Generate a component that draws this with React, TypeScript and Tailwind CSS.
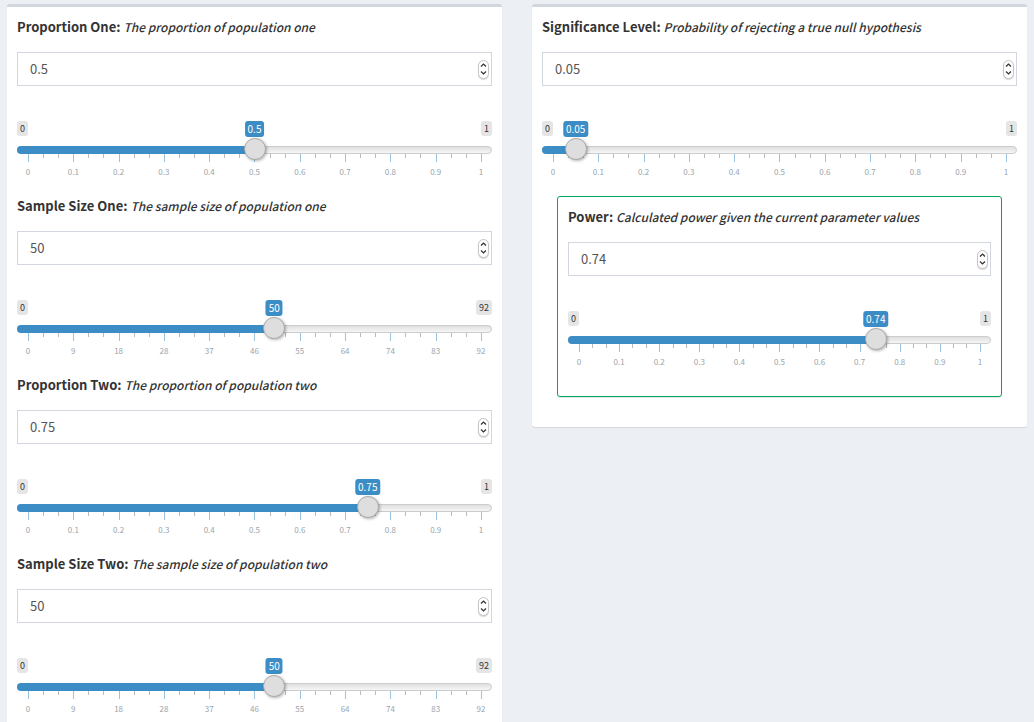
import { useId, useState } from "react";

type Parameter = {
  name: string;
  description: string;
  initial: number;
  max: number;
  step: number;
  ticks: number[];
};

const unitTicks = [0, 0.1, 0.2, 0.3, 0.4, 0.5, 0.6, 0.7, 0.8, 0.9, 1];
const sizeTicks = [0, 9, 18, 28, 37, 46, 55, 64, 74, 83, 92];

const populations: Parameter[] = [
  { name: "Proportion One", description: "The proportion of population one", initial: 0.5, max: 1, step: 0.01, ticks: unitTicks },
  { name: "Sample Size One", description: "The sample size of population one", initial: 50, max: 92, step: 1, ticks: sizeTicks },
  { name: "Proportion Two", description: "The proportion of population two", initial: 0.75, max: 1, step: 0.01, ticks: unitTicks },
  { name: "Sample Size Two", description: "The sample size of population two", initial: 50, max: 92, step: 1, ticks: sizeTicks },
];

const significance: Parameter = {
  name: "Significance Level",
  description: "Probability of rejecting a true null hypothesis",
  initial: 0.05,
  max: 1,
  step: 0.01,
  ticks: unitTicks,
};

const power: Parameter = {
  name: "Power",
  description: "Calculated power given the current parameter values",
  initial: 0.74,
  max: 1,
  step: 0.01,
  ticks: unitTicks,
};

function Chevron({ up = false }: { up?: boolean }) {
  return (
    <svg viewBox="0 0 7 4" className="h-1 w-[7px]" fill="none" stroke="#333" strokeWidth="1.3" aria-hidden="true">
      <path d={up ? "M1 3.4 3.5 1.1 6 3.4" : "M1 .6l2.5 2.3L6 .6"} />
    </svg>
  );
}

function Control({ parameter }: { parameter: Parameter }) {
  const { name, description, initial, max, step, ticks } = parameter;
  const [value, setValue] = useState(initial);
  const id = useId();
  const share = value / max;
  const change = (next: number) => setValue(Math.min(max, Math.max(0, Number(next.toFixed(2)))));

  return (
    <div className="pb-[18px]">
      <label htmlFor={id} className="block text-[13px] leading-5 font-bold whitespace-nowrap text-[#333]">
        {name}: <em className="text-[12px] font-medium">{description}</em>
      </label>

      <div className="mt-[15px] flex h-[34px] items-center border border-[#d2d6de] bg-white">
        <input
          id={id}
          type="number"
          min={0}
          max={max}
          step={step}
          value={value}
          onChange={(event) => change(Number(event.target.value))}
          className="h-full min-w-0 flex-1 appearance-none bg-transparent px-3 pb-0.5 text-[13px] text-[#555] outline-none [-moz-appearance:textfield] [&::-webkit-inner-spin-button]:appearance-none"
        />
        <div className="mr-0.5 flex h-[19px] w-[11px] flex-col overflow-hidden rounded-full border border-[#c4c4c4] bg-white shadow-[0_1px_1px_rgba(0,0,0,0.15)]">
          <button type="button" aria-label={`Increase ${name}`} onClick={() => change(value + step)} className="flex flex-1 items-end justify-center pb-0.5">
            <Chevron up />
          </button>
          <button type="button" aria-label={`Decrease ${name}`} onClick={() => change(value - step)} className="flex flex-1 items-start justify-center pt-0.5">
            <Chevron />
          </button>
        </div>
      </div>

      <div className="relative mt-[35px]">
        <div className="flex h-4 items-start justify-between text-[9px] leading-[15px] text-[#333]">
          <span className="rounded-[3px] bg-[#e5e5e5] px-[3px]">0</span>
          <span className="rounded-[3px] bg-[#e5e5e5] px-[3px]">{max}</span>
        </div>
        <output
          htmlFor={id}
          className="absolute top-0 -translate-x-1/2 rounded-[3px] bg-[#3c8dc5] px-[3px] text-[10px] leading-4 text-white"
          style={{ left: `calc(11px + (100% - 22px) * ${share})` }}
        >
          {value}
        </output>

        <div className="relative mt-[9px] h-2 rounded-lg border border-[#ccc] bg-linear-to-b from-[#e0e0e0] to-[#f6f6f6]">
          <div
            className="absolute -top-px -left-px h-2 rounded-l-lg bg-[#3c8dc5]"
            style={{ width: `calc(11px + (100% - 20px) * ${share})` }}
          />
          <input
            type="range"
            aria-label={`${name} slider`}
            min={0}
            max={max}
            step={step}
            value={value}
            onChange={(event) => change(Number(event.target.value))}
            className="absolute -top-[9px] -left-px z-10 h-[22px] w-[calc(100%+2px)] appearance-none bg-transparent [&::-webkit-slider-thumb]:size-[22px] [&::-webkit-slider-thumb]:appearance-none [&::-webkit-slider-thumb]:rounded-full [&::-webkit-slider-thumb]:border [&::-webkit-slider-thumb]:border-[#aaa] [&::-webkit-slider-thumb]:bg-[#dedede] [&::-webkit-slider-thumb]:shadow-[1px_1px_3px_rgba(0,0,0,0.3)]"
          />
        </div>

        <div className="mr-[10px] ml-[11px] flex h-2 items-start justify-between" aria-hidden="true">
          {Array.from({ length: 31 }, (_, index) => (
            <span key={index} className={index % 3 === 0 ? "h-2 w-px bg-[#9cc3de]" : "h-1 w-px bg-[#bbb]"} />
          ))}
        </div>
        <div className="mx-[11px] mt-1 flex justify-between text-[8px] leading-3 text-[#99a4ac]">
          {ticks.map((tick) => (
            <span key={tick} className="flex w-0 justify-center whitespace-nowrap">
              {tick}
            </span>
          ))}
        </div>
      </div>
    </div>
  );
}

export default function App() {
  return (
    <main className="h-screen overflow-y-auto bg-[#ecf0f5] px-[7px] pt-1 font-['Noto_Sans_CJK_JP','Noto_Sans_CJK_SC',sans-serif] [scrollbar-width:none]">
      <div className="grid grid-cols-2 items-start gap-[30px] pb-5">
        <section className="rounded-[3px] border-t-[3px] border-[#d2d6de] bg-white p-[10px] shadow-[0_1px_1px_rgba(0,0,0,0.1)]">
          {populations.map((parameter) => (
            <Control key={parameter.name} parameter={parameter} />
          ))}
        </section>

        <section className="rounded-[3px] border-t-[3px] border-[#d2d6de] bg-white p-[10px] shadow-[0_1px_1px_rgba(0,0,0,0.1)]">
          <Control parameter={significance} />
          <div className="mx-[15px] mb-5 rounded-[3px] border border-[#00a65a] p-[10px] shadow-[0_1px_1px_rgba(0,0,0,0.1)]">
            <Control parameter={power} />
          </div>
        </section>
      </div>
    </main>
  );
}
